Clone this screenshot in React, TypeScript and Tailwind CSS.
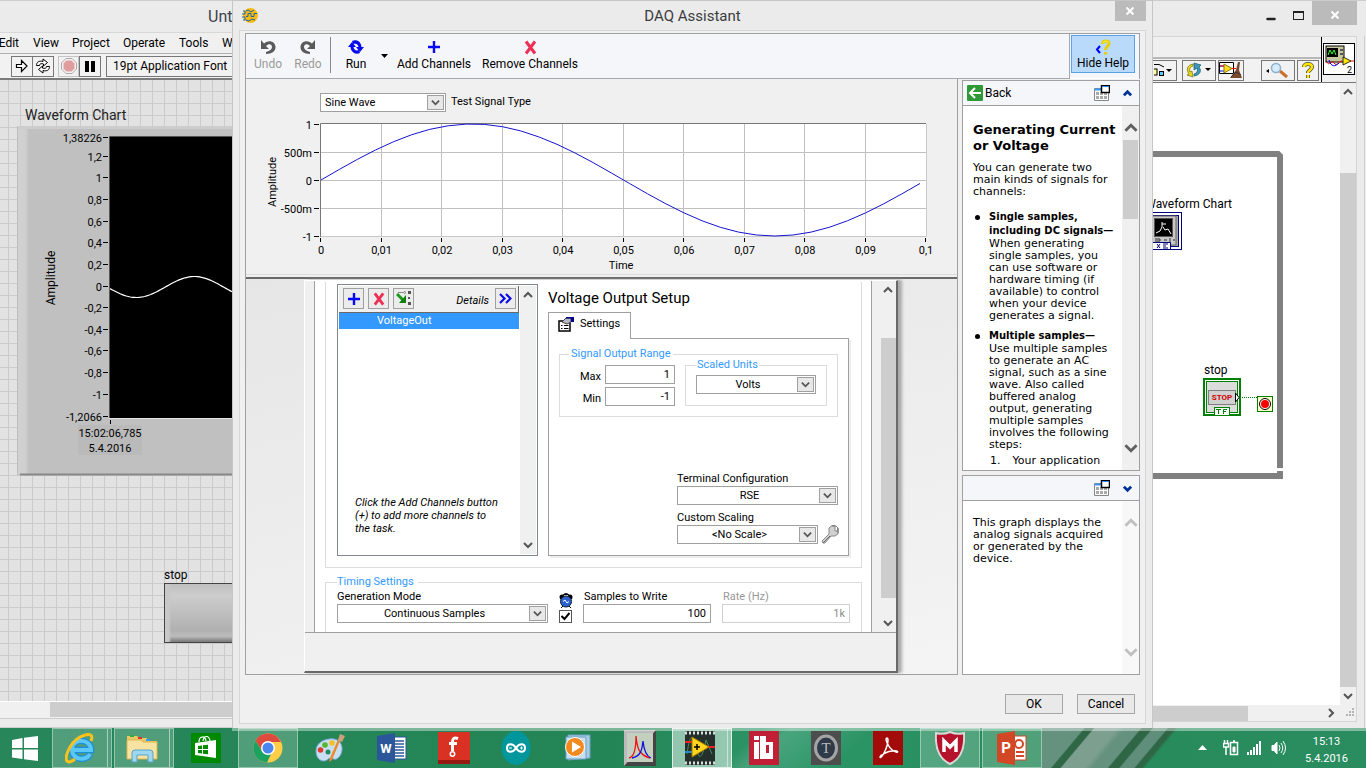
import type { ReactNode } from "react"
import { Minus } from "lucide-react"

const yLabels: [string, number][] = [
  ["1,38226", 138],
  ["1,2", 157],
  ["1", 178],
  ["0,8", 200],
  ["0,6", 222],
  ["0,4", 243],
  ["0,2", 265],
  ["0", 287],
  ["-0,2", 308],
  ["-0,4", 330],
  ["-0,6", 351],
  ["-0,8", 373],
  ["-1", 395],
  ["-1,2066", 417],
]

const previewTicks = ["0", "0,01", "0,02", "0,03", "0,04", "0,05", "0,06", "0,07", "0,08", "0,09", "0,1"]

const sine = (steps: number, x0: number, width: number, mid: number, amp: number, phase: number, turns: number) =>
  Array.from({ length: steps + 1 }, (_, i) => {
    const t = i / steps
    const y = mid - amp * Math.sin(phase + t * turns * 2 * Math.PI)
    return `${(x0 + t * width).toFixed(1)},${y.toFixed(1)}`
  }).join(" ")

type Direction = "up" | "down" | "right"

const chevrons: Record<Direction, string> = {
  up: "M1 7 L5 3 L9 7",
  down: "M1 3 L5 7 L9 3",
  right: "M3 1 L7 5 L3 9",
}

const Chevron = ({ dir, size = 10, color = "#555", width = 2 }: { dir: Direction; size?: number; color?: string; width?: number }) => (
  <svg width={size} height={size} viewBox="0 0 10 10" fill="none" stroke={color} strokeWidth={width}>
    <path d={chevrons[dir]} />
  </svg>
)

const CloseCross = () => (
  <svg width="8" height="8" viewBox="0 0 8 8" stroke="#fff" strokeWidth="2">
    <path d="M0.5 0.5 L7.5 7.5 M7.5 0.5 L0.5 7.5" />
  </svg>
)

const DropDown = ({ id, value, className, center = true }: { id: string; value: string; className: string; center?: boolean }) => (
  <div className={`relative h-[19px] border border-[#a0a0a0] bg-white ${className}`}>
    <select
      id={id}
      className={`block h-full w-full appearance-none bg-transparent pr-5 pl-1 text-[11px] leading-4 outline-none ${center ? "[text-align-last:center]" : ""}`}
    >
      <option>{value}</option>
    </select>
    <span className="pointer-events-none absolute inset-y-px right-px flex w-[17px] items-center justify-center border border-[#a0a0a0] bg-[#e8e8e8]">
      <Chevron dir="down" size={9} />
    </span>
  </div>
)

/* ---------- front panel window ---------- */

const FrontPanelChart = () => (
  <svg width="215" height="350" viewBox="17 126 215 350" className="ml-[17px] block font-['Roboto',sans-serif] text-[11px]">
    <defs>
      <linearGradient id="bevel">
        <stop offset="0" stopColor="#d2d2d2" />
        <stop offset="0.7" stopColor="#cfcfcf" />
        <stop offset="1" stopColor="#c0c0c0" />
      </linearGradient>
    </defs>
    <rect x="17" y="127" width="215" height="348" fill="#c0c0c0" />
    <rect x="17" y="127" width="12" height="347" fill="url(#bevel)" />
    <path d="M17 127.5H232" stroke="#cdcdcd" strokeWidth="3" />
    <path d="M17.5 127V474" stroke="#bdbdbd" />
    <path d="M20 474.5H232" stroke="#888" strokeWidth="2" />
    <rect x="110" y="136" width="122" height="282" fill="#000" />
    <path d="M109.500 418V136.500H232" stroke="#555" fill="none" />
    <path d="M109 418.500H232" stroke="#e4e4e4" />
    {yLabels.map(([text, y]) => (
      <g key={text}>
        <text x="102" y={y + 4} textAnchor="end">
          {text}
        </text>
        <path d={`M103 ${y - 0.5}H108`} stroke="#000" />
      </g>
    ))}
    <polyline points={sine(60, 110, 122, 287, 10.5, Math.PI + 0.15, 1.05)} fill="none" stroke="#fff" strokeWidth="1.2" />
    <path d="M110.500 420V424" stroke="#000" />
    <rect x="78" y="425" width="64" height="30" fill="#bababa" />
    <text x="110" y="437" textAnchor="middle">15:02:06,785</text>
    <text x="110" y="452" textAnchor="middle">5.4.2016</text>
    <text transform="translate(55 278) rotate(-90)" textAnchor="middle" fontSize="12">Amplitude</text>
  </svg>
)

const ToolButton = ({ label, className, children }: { label: string; className: string; children: ReactNode }) => (
  <button aria-label={label} className={`flex h-[21px] items-center justify-center border ${className}`}>
    {children}
  </button>
)

const FrontPanelWindow = () => (
  <section className="flex w-[232px] shrink-0 flex-col overflow-hidden border-t border-[#cccccc] bg-[#ebebeb]">
    <header className="flex h-8 items-center justify-end border-b border-[#d8d8d8] text-base text-[#3c424c]">
      <span className="w-6">Unt</span>
    </header>
    <nav className="flex h-5 shrink-0 items-center gap-[14px] overflow-hidden bg-[#f0f0f0] text-xs whitespace-nowrap">
      <a href="#edit" className="w-[19px] [direction:rtl]">Edit</a>
      <a href="#view" className="w-[25px]">View</a>
      <a href="#project" className="w-[37px]">Project</a>
      <a href="#operate" className="w-[42px]">Operate</a>
      <a href="#tools" className="w-[29px]">Tools</a>
      <a href="#window">Window</a>
    </nav>
    <div className="flex h-[27px] shrink-0 items-center border-t border-b-2 border-t-[#b0b0b0] border-b-[#7c7c7c] bg-[#f2f2f2] pl-[11px] text-xs">
      <ToolButton label="Run" className="w-[22px] border-[#777]">
        <svg width="14" height="14" viewBox="0 0 14 14" fill="#fff" stroke="#000" strokeWidth="1.200">
          <path d="M1.500 5.500H6.500V1.500L12 7L6.500 12.500V8.500H1.500Z" />
        </svg>
      </ToolButton>
      <ToolButton label="Run continuously" className="-ml-px w-[22px] border-[#777]">
        <svg width="16" height="16" viewBox="0 0 16 16" fill="#fff" stroke="#000">
          <path d="M1.500 7.500C1.500 4 4 2.500 8 3.500V1L12.500 4.500L8.500 8V6C6 5 4.500 6 4.500 7.500Z" />
          <path d="M14.500 8.500C14.500 12 12 13.500 8 12.500V15L3.500 11.500L7.500 8V10C10 11 11.500 10 11.500 8.500Z" />
        </svg>
      </ToolButton>
      <ToolButton label="Abort" className="ml-1 w-[21px] border-[#c4c4c4]">
        <svg width="16" height="16" viewBox="0 0 16 16">
          <path d="M5 0.500H11L15.500 5V11L11 15.500H5L0.500 11V5Z" fill="#f6f0f0" stroke="#aaa" />
          <path d="M5.500 2.500H10.500L13.500 5.500V10.500L10.500 13.500H5.500L2.500 10.500V5.500Z" fill="#df9d9d" />
        </svg>
      </ToolButton>
      <ToolButton label="Pause" className="w-[22px] border-[#777]">
        <svg width="10" height="11" viewBox="0 0 10 11">
          <path d="M0 0H4V11H0ZM6 0H10V11H6Z" />
        </svg>
      </ToolButton>
      <button className="ml-[5px] h-[21px] flex-1 border border-r-0 border-[#777] pl-[6px] text-left whitespace-nowrap">19pt Application Font</button>
    </div>
    <div className="min-h-0 flex-1 overflow-hidden bg-[#e2e2e2] bg-[linear-gradient(to_right,#cbcbcb_1px,transparent_1px),linear-gradient(to_bottom,#cbcbcb_1px,transparent_1px)] bg-[size:12px_12px] bg-[position:8px_11px] pt-[26px]">
      <h2 className="h-5 pl-[25px] text-sm leading-[18px] text-[#222]">Waveform Chart</h2>
      <FrontPanelChart />
      <div className="mt-[92px] ml-[164px] text-xs">
        <label htmlFor="stop" className="block h-[15px] leading-[15px]">stop</label>
        <button
          id="stop"
          aria-label="stop"
          className="block h-[60px] w-full border border-r-0 border-[#444] bg-[linear-gradient(#c0c0c0,#cdcdcd_20%,#b0b0b0_80%,#bcbcbc_90%,#777)] shadow-[inset_6px_0_2px_-1px_#c8c8c8]"
        />
      </div>
    </div>
    <div className="flex h-[17px] shrink-0 border-t border-white bg-[#f0f0f0] pl-[50px]">
      <div className="h-[15px] flex-1 bg-[#cdcdcd]" />
    </div>
    <div className="h-[10px] shrink-0 border-t border-b border-[#cccccc]" />
  </section>
)

/* ---------- block diagram window ---------- */

const BlockDiagram = () => (
  <svg width="187" height="623" viewBox="1153 83 187 623" className="block flex-1 bg-white font-['Roboto',sans-serif] text-[12px]">
    <path d="M1153 154H1278L1280 156V468" stroke="#808080" strokeWidth="6" fill="none" />
    <path d="M1153 476H1283M1277 472H1283" stroke="#808080" strokeWidth="6" />
    <path d="M1276 470H1283" stroke="#fff" strokeWidth="2" />
    <text x="1232" y="208" textAnchor="end">Waveform Chart</text>
    <g>
      <rect x="1144.500" y="212.500" width="37" height="37" fill="#fff" stroke="#00007f" />
      <rect x="1146.500" y="215.500" width="32" height="31" fill="#aaa" stroke="#00007f" />
      <rect x="1150" y="216" width="26" height="29" fill="#c8c8c8" stroke="#666" />
      <rect x="1154.500" y="218.500" width="18" height="18" fill="#000" stroke="#555" />
      <path d="M1156 233L1160 231L1162 227V222M1162 224H1166M1163 227L1165 230L1168 229L1171 234" stroke="#fff" fill="none" />
      <path d="M1155 239H1160V241H1155M1170 238V242M1174 239V241M1164 240H1167" stroke="#333" fill="none" />
      <rect x="1153" y="243" width="18" height="6" fill="#fff" />
      <path d="M1153 242.500H1170.500V249M1157 244L1160 248M1160 244L1157 248M1163 244H1168M1163 248H1168M1163 246H1166" stroke="#00007f" fill="none" />
    </g>
    <text x="1204" y="374">stop</text>
    <rect x="1204" y="379" width="36" height="36" fill="#fff" stroke="#008000" strokeWidth="2" />
    <rect x="1206.500" y="381.500" width="31" height="31" fill="#dcdcdc" stroke="#008000" />
    <rect x="1208.500" y="390.500" width="27" height="14" fill="#d0d0d0" stroke="#808080" />
    <text x="1222" y="400" textAnchor="middle" fill="#d00000" fontSize="8" fontWeight="700">STOP</text>
    <path d="M1235.500 393V402L1239 397.500Z" fill="#fff" stroke="#000" />
    <rect x="1214.500" y="407.500" width="15" height="8" fill="#fff" stroke="#008000" />
    <path d="M1216 409.500H1221M1218.500 409V414M1223.500 414V409.500H1227M1223 411.500H1226" stroke="#008000" fill="none" />
    <path d="M1242 397.500H1257" stroke="#008000" strokeDasharray="1 1" />
    <rect x="1257.500" y="396.500" width="15" height="15" fill="#ffffcc" stroke="#008000" />
    <circle cx="1265" cy="404" r="5.500" fill="#fff" stroke="#000" />
    <circle cx="1265" cy="404" r="4" fill="#f00" />
  </svg>
)

const BlockDiagramWindow = () => (
  <section className="flex w-[213px] shrink-0 flex-col border-t border-[#cccccc] bg-[#ebebeb]">
    <header className="flex h-[35px] items-start justify-end pr-[9px]">
      <button aria-label="Minimize" className="mt-3 mr-4">
        <Minus size={12} strokeWidth={5} className="text-[#222]" />
      </button>
      <button aria-label="Maximize" className="mt-[10px] h-[9px] w-[11px] border border-t-2 border-[#222]" />
      <button aria-label="Close" className="ml-2 flex h-[24px] w-[45px] items-center justify-center bg-[#bbbbbb] pt-1">
        <CloseCross />
      </button>
    </header>
    <div className="mr-px flex min-h-0 flex-1 flex-col border-r border-[#cfcfcf] pr-[7px]">
      <div className="flex min-h-0 flex-1 flex-col border-t border-r border-b border-[#d4d4d4] bg-[#f0f0f0]">
        <div className="flex h-[46px] shrink-0 border-b border-[#777]">
          <div className="flex flex-1 flex-col">
            <div className="h-5" />
            <div className="flex h-[25px] items-center border-t-2 border-[#b8b8b8] bg-[#f2f2f2]">
              <ToolButton label="Reorder" className="w-[24px] border-l-0 border-[#777]">
                <svg width="22" height="15" viewBox="0 0 22 15">
                  <path d="M0 1.500H5L10 4" stroke="#000" fill="none" />
                  <rect x="-1" y="6" width="4" height="6" fill="#ff9" stroke="#000" />
                  <rect x="5.500" y="8.500" width="4" height="4" fill="#5cf" stroke="#000" />
                  <path d="M12 6H18L15 9Z" />
                </svg>
              </ToolButton>
              <ToolButton label="Clean up" className="ml-[5px] w-[34px] border-[#777]">
                <svg width="28" height="17" viewBox="0 0 28 17">
                  <path d="M8 2C2 3 1 8 4 12L2 13L8 15L7 9L5 10C4 7 5 5 8 4Z" fill="#e8d820" stroke="#77700a" strokeWidth="0.700" />
                  <path d="M9 14C15 13 17 9 14 5L16 3L9 1V8L12 6C13 9 12 11 9 12Z" fill="#3b9bb8" stroke="#14566c" strokeWidth="0.700" />
                  <path d="M20 6H26L23 9Z" />
                </svg>
              </ToolButton>
              <ToolButton label="Clean up diagram" className="ml-[2px] w-[26px] border-[#777]">
                <svg width="24" height="19" viewBox="0 0 24 19">
                  <path d="M0.500 1.500H14.500V12.500H0.500Z" stroke="#000" fill="#fff" />
                  <path d="M1 5H5M1 10H5" stroke="#00f" />
                  <path d="M1 5H5M12 7.500H17" stroke="#f00" />
                  <path d="M5 3L13 7.500L5 12Z" fill="#ffde20" stroke="#8a7400" />
                  <path d="M19 1L21 1L20 9L23 17H11L17 9Z" fill="#7a4a2c" />
                  <path d="M12 16L17 11L22 14" stroke="#333" fill="none" />
                </svg>
              </ToolButton>
              <ToolButton label="Search" className="ml-[17px] w-[34px] border-[#777]">
                <svg width="24" height="18" viewBox="0 0 24 18">
                  <path d="M3 7V11L0 9Z" />
                  <path d="M14 9L21 15" stroke="#c8702c" strokeWidth="3" />
                  <circle cx="10" cy="6" r="4.500" fill="#d6ecfa" stroke="#8ab0cc" strokeWidth="1.500" />
                </svg>
              </ToolButton>
              <ToolButton label="Context help" className="ml-[2px] w-[22px] border-[#777]">
                <svg width="12" height="17" viewBox="0 0 12 17" fill="none">
                  <path d="M2 5C2 1 10 1 10 5C10 8 6 8 6 11M6 13V16" stroke="#444" strokeWidth="4" />
                  <path d="M2 5C2 1 10 1 10 5C10 8 6 8 6 11M6 13V16" stroke="#ffe600" strokeWidth="2.500" />
                </svg>
              </ToolButton>
            </div>
          </div>
          <div className="flex w-[35px] items-center border-l border-black pl-px">
            <svg width="33" height="33" viewBox="0 0 33 33">
              <rect x="0.500" y="0.500" width="31" height="31" fill="#fff" stroke="#000" />
              <rect x="3" y="3" width="18" height="16" fill="#c8c8a0" stroke="#000" />
              <rect x="4" y="5" width="11" height="9" fill="#000" />
              <path d="M5 12L7 7L9 11L11 7L13 12" stroke="#3f3" fill="none" />
              <path d="M17 7H20M17 11H20" stroke="#555" strokeWidth="2" />
              <path d="M4 19C6 24 8 16 11 20S16 18 19 18" stroke="#f00" fill="none" />
              <path d="M6 17C8 24 12 24 16 20" stroke="#00f" fill="none" />
              <path d="M20 14L28 18L20 22Z" fill="#ffe600" stroke="#000" strokeWidth="0.800" />
              <path d="M28 18H31" stroke="#f00" />
              <text x="24" y="30" fontSize="9">2</text>
            </svg>
          </div>
        </div>
        <div className="flex min-h-0 flex-1 overflow-hidden">
          <BlockDiagram />
          <div className="flex w-4 flex-col items-center py-1">
            <Chevron dir="up" />
            <div className="mt-[76px] w-full flex-1 bg-[#cdcdcd]" />
            <div className="pt-1">
              <Chevron dir="down" />
            </div>
          </div>
        </div>
        <div className="flex h-4 shrink-0 items-center justify-between">
          <div className="h-[15px] w-[95px] bg-[#cdcdcd]" />
          <div className="flex items-center gap-[10px]">
            <Chevron dir="right" />
            <svg width="10" height="10" viewBox="0 0 10 10" fill="#b4b4b4">
              <path d="M6 0h2v2H6zM6 3h2v2H6zM3 3h2v2H3zM6 6h2v2H6zM3 6h2v2H3zM0 6h2v2H0z" />
            </svg>
          </div>
        </div>
      </div>
      <div className="h-[6px] shrink-0" />
    </div>
  </section>
)

/* ---------- DAQ Assistant dialog ---------- */

const UndoArrow = ({ flip = false }: { flip?: boolean }) => (
  <svg width="16" height="16" viewBox="0 0 16 16" className={flip ? "-scale-x-100" : ""}>
    <path d="M1 1V10H9L6 7C9 4 12 5 12 8C12 10 10 12 6 13V15C12 15 16 12 15.500 7.500C15 2.500 9 0 4 4.500Z" fill="#5a5a5a" />
  </svg>
)

const RunArrows = () => (
  <svg width="16" height="16" viewBox="0 0 16 16" fill="#0a0aee">
    <path d="M0 8L4 3L8 8H5.500C6 11 8 12 11 11L12 14C7 16 3 13 2.500 8Z" />
    <path d="M16 8L12 13L8 8H10.500C10 5 8 4 5 5L4 2C9 0 13 3 13.500 8Z" />
  </svg>
)

const PlusMark = ({ size = 14 }: { size?: number }) => (
  <svg width={size} height={size} viewBox="0 0 14 14" stroke="#0a0aee" strokeWidth="2.400">
    <path d="M7 1V13M1 7H13" />
  </svg>
)

const RedCross = ({ size = 15 }: { size?: number }) => (
  <svg width={size} height={size} viewBox="0 0 15 15" stroke="#ee2f55" strokeWidth="3">
    <path d="M3 1.500L12 13.500M12 1.500L3 13.500" />
  </svg>
)

const BarButton = ({ label, icon, className }: { label: string; icon: ReactNode; className: string }) => (
  <button className={`flex flex-col items-center whitespace-nowrap ${className}`}>
    <span className="flex h-5 items-center">{icon}</span>
    <span className="leading-[14px]">{label}</span>
  </button>
)

const DialogToolbar = () => (
  <div className="flex h-[46px] shrink-0 border-x border-t border-[#a0a0a0] text-xs">
    <div className="flex flex-1 border-r border-b border-[#a8a8ac] bg-[#f5f6f9] pt-[3px]">
      <BarButton label="Undo" icon={<UndoArrow />} className="w-11 text-[#9a9a9a]" />
      <BarButton label="Redo" icon={<UndoArrow flip />} className="w-9 text-[#9a9a9a]" />
      <div className="ml-1 h-9 w-px bg-[#888]" />
      <BarButton label="Run" icon={<RunArrows />} className="w-[50px]" />
      <button aria-label="Run options" className="h-7 w-2 pt-[10px]">
        <svg width="7" height="4" viewBox="0 0 7 4">
          <path d="M0 0H7L3.500 4Z" />
        </svg>
      </button>
      <BarButton label="Add Channels" icon={<PlusMark />} className="w-[90px]" />
      <BarButton label="Remove Channels" icon={<RedCross />} className="w-[102px]" />
    </div>
    <div className="w-[69px] border-b border-white bg-[#f5f6f9] pt-px pl-px">
      <button className="flex h-[38px] w-16 flex-col items-center border border-[#5ba1e6] bg-[#b9dafa] pt-[3px]">
        <svg width="16" height="17" viewBox="0 0 16 17" fill="none" className="shrink-0">
          <path d="M5 7L2 10.500L5 14" stroke="#00f" strokeWidth="2" />
          <path d="M7.500 5C7.500 1 14 1 14 4.500C14 7.500 10.500 7.500 10.500 11M10.500 13V15.500" stroke="#e8d000" strokeWidth="3" />
          <path d="M8 4C9 1.500 13 1.500 13.500 4" stroke="#fff34a" />
        </svg>
        <span className="leading-[14px]">Hide Help</span>
      </button>
    </div>
  </div>
)

const PreviewGraph = () => (
  <svg width="690" height="158" viewBox="246 114 690 158" className="block font-['Roboto',sans-serif] text-[11px]">
    <rect x="320" y="123" width="606" height="114" fill="#fff" />
    {previewTicks.map((t, i) => (
      <g key={t}>
        {i > 0 && i < 10 && <path d={`M${Math.round(320 + i * 60.5) + 0.5} 124V236`} stroke="#c0c0c0" />}
        <path d={`M${Math.round(320 + i * 60.5) + 0.5} 238V242`} stroke="#000" />
        <text x={321 + i * 60.5} y="254" textAnchor="middle">
          {t}
        </text>
      </g>
    ))}
    {["1", "500m", "0", "-500m", "-1"].map((t, i) => (
      <g key={t}>
        {i > 0 && i < 4 && <path d={`M321 ${124.5 + i * 28}H926`} stroke="#c0c0c0" />}
        <path d={`M314 ${124.5 + i * 28}H319`} stroke="#000" />
        <text x="312" y={129 + i * 28} textAnchor="end">
          {t}
        </text>
      </g>
    ))}
    <path d="M320.500 237V123.500H926" stroke="#777" fill="none" />
    <path d="M321 236.500H926.500V124" stroke="#c8c8c8" fill="none" />
    <polyline points={sine(33, 321, 599, 180, 56, 0, 0.99)} fill="none" stroke="#1414cc" />
    <text x="621" y="269" textAnchor="middle">Time</text>
    <text transform="translate(276 182) rotate(-90)" textAnchor="middle">Amplitude</text>
  </svg>
)

const SmallButton = ({ label, children }: { label: string; children: ReactNode }) => (
  <button aria-label={label} className="flex h-[21px] w-[21px] items-center justify-center border border-[#a0a0a0] bg-[#ececec]">
    {children}
  </button>
)

const ChannelList = () => (
  <div className="mt-[2px] flex h-[272px] w-[201px] shrink-0 border border-[#828790] bg-white p-px">
    <div className="flex flex-1 flex-col pr-px">
      <div className="flex h-[27px] items-start gap-1 border-r border-b border-[#696969] bg-[#f0f0f0] pt-[2px] pr-[2px] pl-1">
        <SmallButton label="Add">
          <PlusMark />
        </SmallButton>
        <SmallButton label="Remove">
          <RedCross size={14} />
        </SmallButton>
        <SmallButton label="Change order">
          <svg width="16" height="15" viewBox="0 0 16 15">
            <path d="M1 3L8 10" stroke="#1a9a1a" strokeWidth="3" />
            <path d="M10 4V12H3Z" fill="#108010" />
            <path d="M2 1.500H8M8 0L10 1.500L8 3" stroke="#888" fill="none" />
            <path d="M12 0h3v3h-3zM12 11h3v3h-3zM12 6h2v2h-2z" fill="#555" />
          </svg>
        </SmallButton>
        <span className="ml-auto pt-[5px] pr-[2px] italic">Details</span>
        <SmallButton label="Show details">
          <svg width="13" height="11" viewBox="0 0 13 11" fill="none" stroke="#0a0aee" strokeWidth="2.200">
            <path d="M1 1L5.500 5.500L1 10M7 1L11.500 5.500L7 10" />
          </svg>
        </SmallButton>
      </div>
      <div className="h-4 bg-[#3399ff] pl-[38px] leading-[15px] text-white">VoltageOut</div>
      <p className="mt-auto mb-[19px] pl-4 leading-[13px] italic">
        Click the Add Channels button
        <br />
        (+) to add more channels to
        <br />
        the task.
      </p>
    </div>
    <div className="flex w-4 flex-col items-center justify-between bg-[#f0f0f0] py-1">
      <Chevron dir="up" />
      <Chevron dir="down" />
    </div>
  </div>
)

const fieldClass = "h-[19px] border border-[#a0a0a0] bg-white px-1 text-right text-[11px] outline-none"

const VoltageSetup = () => (
  <div className="flex w-[301px] shrink-0 flex-col">
    <h2 className="h-[30px] pt-[6px] text-[15px] leading-5">Voltage Output Setup</h2>
    <button className="relative -mb-px flex h-[27px] w-[83px] shrink-0 items-center gap-[5px] border border-b-0 border-[#a0a0a0] bg-white pb-1 pl-[9px]">
      <svg width="17" height="15" viewBox="0 0 17 15">
        <rect x="1" y="4" width="11" height="10" fill="#fff" stroke="#000" strokeWidth="1.500" />
        <path d="M3 8.500H4.500M6 8.500H10.500M3 11.500H4.500M6 11.500H10.500" stroke="#000" />
        <path d="M4 5L8 1H13V5L9 7Z" fill="#b8b8c8" stroke="#444" />
        <path d="M8 0H16V5H13V1.500H8Z" fill="#00008a" />
      </svg>
      Settings
    </button>
    <div className="h-[218px] border border-[#a0a0a0] pt-2 pl-[10px] shadow-[2px_2px_0_#ededed]">
      <fieldset className="flex h-[70px] w-[279px] border border-[#dcdcdc]">
        <legend className="ml-[9px] h-[14px] px-[2px] leading-[14px] text-[#3399ff]">Signal Output Range</legend>
        <div className="grid h-[42px] grid-cols-[41px_70px] items-center gap-x-1 gap-y-[3px] pt-1 text-right">
          <label htmlFor="max" className="pt-[5px] leading-[14px]">Max</label>
          <input id="max" defaultValue="1" className={fieldClass} />
          <label htmlFor="min" className="pt-[5px] leading-[14px]">Min</label>
          <input id="min" defaultValue="-1" className={fieldClass} />
        </div>
        <fieldset className="-mt-[3px] ml-[10px] h-12 w-[142px] border border-[#dcdcdc] pt-[3px] pl-[10px]">
          <legend className="h-[14px] px-px leading-[14px] text-[#3399ff]">
            <label htmlFor="units">Scaled Units</label>
          </legend>
          <DropDown id="units" value="Volts" className="w-[120px]" />
        </fieldset>
      </fieldset>
      <div className="mt-[55px] ml-[118px] leading-[14px]">
        <label htmlFor="terminal" className="block">Terminal Configuration</label>
        <DropDown id="terminal" value="RSE" className="w-[161px]" />
        <label htmlFor="scaling" className="mt-[6px] block">Custom Scaling</label>
        <div className="flex items-center gap-[3px]">
          <DropDown id="scaling" value="<No Scale>" className="w-[141px]" />
          <button aria-label="Edit scale">
            <svg width="18" height="19" viewBox="0 0 18 19">
              <path d="M1 16L8 9V3L11 0.500H14V6H16L17 3V9L14 11H10L4 18H2Z" fill="#d0d0d0" stroke="#888" />
              <path d="M11 1H15L17 3V8" stroke="#777" fill="none" />
              <path d="M2 18L9 11" stroke="#666" />
            </svg>
          </button>
        </div>
      </div>
    </div>
  </div>
)

const TimingSettings = () => (
  <fieldset className="mt-[7px] h-20 w-[537px] border border-[#dcdcdc] pl-[11px]">
    <legend className="h-[14px] pr-1 leading-[14px] text-[#3399ff]">Timing Settings</legend>
    <div className="flex items-start pt-px leading-[14px]">
      <div>
        <label htmlFor="mode" className="block">Generation Mode</label>
        <DropDown id="mode" value="Continuous Samples" className="w-[211px]" />
      </div>
      <label className="ml-[10px] flex w-[15px] flex-col items-center gap-px pt-[3px]">
        <svg width="14" height="16" viewBox="0 0 14 16">
          <path d="M5 1.500H9M4 2L7 0L10 2" stroke="#000" fill="none" />
          <circle cx="3" cy="4" r="2.500" />
          <circle cx="11" cy="4" r="2.500" />
          <path d="M2 15L4 13M12 15L10 13" stroke="#000" />
          <circle cx="7" cy="8.500" r="5.500" fill="#2c62d0" stroke="#123" />
          <path d="M4 8.500L6 7L8 10L10 8.500" stroke="#fff" fill="none" />
        </svg>
        <span className="relative block h-[13px] w-[13px]">
          <input type="checkbox" defaultChecked aria-label="Use waveform timing" className="block h-[13px] w-[13px] appearance-none border border-[#555] bg-white" />
          <svg width="9" height="9" viewBox="0 0 9 9" className="pointer-events-none absolute top-[2px] left-[2px]">
            <path d="M0.500 4L3.500 7L8.500 1" stroke="#000" strokeWidth="2" fill="none" />
          </svg>
        </span>
      </label>
      <div className="ml-[10px] w-[128px]">
        <label htmlFor="samples" className="block pl-px">Samples to Write</label>
        <input id="samples" defaultValue="100" className={`w-full ${fieldClass}`} />
      </div>
      <div className="ml-[11px] w-[128px]">
        <label htmlFor="rate" className="block pl-px text-[#999]">Rate (Hz)</label>
        <input id="rate" defaultValue="1k" disabled className="h-[19px] w-full border border-[#d0d0d0] bg-white px-1 text-right text-[11px] text-[#8c8c8c]" />
      </div>
    </div>
  </fieldset>
)

const PanelIcon = () => (
  <svg width="16" height="16" viewBox="0 0 16 16">
    <path d="M0.500 3.500H14.500V15.500H0.500Z" fill="#fff" stroke="#888" />
    <path d="M1 4.500H7" stroke="#3399ff" strokeWidth="2" />
    <path d="M2 7h3v3H2zM6 7h3v3H6zM10 8h3v2h-3zM2 11h3v3H2zM6 11h3v3H6zM10 11h3v3h-3z" fill="#aaa" />
    <rect x="7.500" y="0.500" width="8" height="7" fill="#fff" stroke="#000" strokeWidth="1.500" />
    <path d="M8 1.500H15" stroke="#38f" />
  </svg>
)

const HelpScroll = ({ thumb = false }: { thumb?: boolean }) => (
  <div className={`flex w-[17px] shrink-0 flex-col items-center py-[15px] ${thumb ? "bg-[#f0f0f0]" : "bg-[#f8f8f8]"}`}>
    <Chevron dir="up" size={14} color={thumb ? "#606060" : "#c0c0c0"} />
    <div className={`mt-[5px] h-[79px] w-[15px] ${thumb ? "bg-[#cdcdcd]" : ""}`} />
    <div className="mt-auto">
      <Chevron dir="down" size={14} color={thumb ? "#606060" : "#c0c0c0"} />
    </div>
  </div>
)

const HelpColumn = () => (
  <aside className="flex w-[178px] shrink-0 flex-col gap-1 pt-px">
    <section className="flex min-h-0 flex-1 flex-col border border-[#a0a0a0] bg-white">
      <header className="flex h-[25px] shrink-0 items-center border-b border-[#a0a0a0] bg-[#f5f6f9] pr-[7px] pl-1 text-xs">
        <button className="flex items-center gap-[2px]">
          <svg width="16" height="16" viewBox="0 0 16 16">
            <rect width="16" height="16" rx="1" fill="#2d9a37" />
            <path d="M8 3L3 8L8 13M3 8H14" stroke="#fff" strokeWidth="2" fill="none" />
          </svg>
          Back
        </button>
        <button aria-label="Detach help" className="mr-[13px] ml-auto">
          <PanelIcon />
        </button>
        <button aria-label="Collapse help">
          <Chevron dir="up" size={9} color="#003399" width={3} />
        </button>
      </header>
      <div className="flex min-h-0 flex-1">
        <article className="min-w-0 flex-1 overflow-hidden pt-4 pl-[10px] font-['DejaVu_Sans',sans-serif] text-[11px] leading-3 whitespace-nowrap">
          <h2 className="text-[13px] leading-4 font-bold">
            Generating Current
            <br />
            or Voltage
          </h2>
          <p className="mt-2">
            You can generate two
            <br />
            main kinds of signals for
            <br />
            channels:
          </p>
          <ul className="mt-3 list-none">
            <li className="flex gap-[9px]">
              <span className="mt-[5px] ml-[2px] h-[5px] w-[5px] shrink-0 rounded-full bg-black" />
              <span>
                <b className="block text-[10px] leading-[14px]">
                  Single samples,
                  <br />
                  including DC signals—
                </b>
                When generating
                <br />
                single samples, you
                <br />
                can use software or
                <br />
                hardware timing (if
                <br />
                available) to control
                <br />
                when your device
                <br />
                generates a signal.
              </span>
            </li>
            <li className="mt-[7px] flex gap-[9px]">
              <span className="mt-[5px] ml-[2px] h-[5px] w-[5px] shrink-0 rounded-full bg-black" />
              <span>
                <b className="block text-[10px] leading-[14px]">Multiple samples—</b>
                Use multiple samples
                <br />
                to generate an AC
                <br />
                signal, such as a sine
                <br />
                wave. Also called
                <br />
                buffered analog
                <br />
                output, generating
                <br />
                multiple samples
                <br />
                involves the following
                <br />
                steps:
                <ol className="mt-1">
                  <li className="flex gap-3 pl-px">
                    <span>1.</span>
                    <span>Your application</span>
                  </li>
                </ol>
              </span>
            </li>
          </ul>
        </article>
        <HelpScroll thumb />
      </div>
    </section>
    <section className="flex h-[200px] shrink-0 flex-col border border-[#a0a0a0] bg-white">
      <header className="flex h-[25px] shrink-0 items-center justify-end gap-[13px] border-b border-[#a0a0a0] bg-[#f5f6f9] pr-[7px]">
        <button aria-label="Detach description">
          <PanelIcon />
        </button>
        <button aria-label="Expand description">
          <Chevron dir="down" size={9} color="#003399" width={3} />
        </button>
      </header>
      <div className="flex flex-1">
        <p className="flex-1 overflow-hidden pt-4 pl-[10px] font-['DejaVu_Sans',sans-serif] text-[11px] leading-3 whitespace-nowrap">
          This graph displays the
          <br />
          analog signals acquired
          <br />
          or generated by the
          <br />
          device.
        </p>
        <HelpScroll />
      </div>
    </section>
  </aside>
)

const DaqDialog = () => (
  <section className="flex min-w-0 flex-1 flex-col border-x border-t border-[#c6c6c6] bg-[#ebebeb]">
    <header className="flex h-[29px] shrink-0 items-start justify-between pl-[9px]">
      <svg width="16" height="17" viewBox="0 0 16 17" className="mt-[6px]">
        <circle cx="8.500" cy="8.500" r="7.500" fill="#fdb913" />
        <path d="M1 4H3V7H0M1 13H3V10H0M4 9.500H6V6.500H9V9.500H12V6.500H15M4 4L6 3L9 5L12 3M4 13L7 14L10 12L13 13" stroke="#1666a8" fill="none" />
      </svg>
      <h1 className="pt-[5px] pl-3 text-[15px] leading-5 text-[#3c3c3c]">DAQ Assistant</h1>
      <button aria-label="Close" className="mr-[6px] flex h-5 w-[31px] items-center justify-center bg-[#bbbbbb]">
        <CloseCross />
      </button>
    </header>
    <div className="mx-[6px] flex min-h-0 flex-1 flex-col border border-[#d6d6d6] bg-[#f0f0f0] px-[5px] pt-[2px]">
      <DialogToolbar />
      <div className="flex min-h-0 flex-1 gap-1">
        <div className="flex min-w-0 flex-1 flex-col border-x border-b border-[#a0a0a0] text-[11px]">
          <div className="h-[200px] shrink-0 border-b-2 border-[#696969]">
            <div className="h-[196px] border-b border-[#dcdcdc] pt-[14px]">
              <div className="flex h-[19px] items-center gap-[5px] pl-[74px]">
                <DropDown id="signal" value="Sine Wave" center={false} className="w-[126px]" />
                <label htmlFor="signal">Test Signal Type</label>
              </div>
              <div className="pt-[2px]">
                <PreviewGraph />
              </div>
            </div>
          </div>
          <div className="flex min-h-0 flex-1 bg-[linear-gradient(165deg,#e6e6e6,#f4f4f4)] py-px pl-[58px]">
            <div className="flex w-[594px] flex-col border-t border-r-2 border-b-2 border-l border-t-white border-r-[#696969] border-b-[#696969] border-l-white bg-[#f0f0f0] shadow-[4px_0_3px_#aaa]">
              <div className="flex min-h-0 flex-1 overflow-hidden">
                <div className="ml-[9px] w-[558px] overflow-hidden border-x border-[#a0a0a0] bg-white pt-px pl-[10px]">
                  <div className="flex h-[286px] w-[537px] gap-[10px] border-x border-b border-[#dcdcdc] pl-[11px]">
                    <ChannelList />
                    <VoltageSetup />
                  </div>
                  <TimingSettings />
                </div>
                <div className="ml-2 flex w-4 flex-col items-center pt-1 pb-1">
                  <Chevron dir="up" />
                  <div className="mt-[43px] mb-5 w-[15px] flex-1 bg-[#cdcdcd]" />
                  <Chevron dir="down" />
                </div>
              </div>
              <div className="h-[39px] shrink-0 border-t border-[#a0a0a0]" />
            </div>
          </div>
        </div>
        <HelpColumn />
      </div>
      <footer className="flex h-12 shrink-0 items-start justify-end gap-[14px] pt-[19px] pr-[5px] text-xs">
        <button className="h-5 w-[58px] border border-[#a6a6a6] bg-[#e9e9e9] leading-[18px]">OK</button>
        <button className="h-5 w-[58px] border border-[#a6a6a6] bg-[#e9e9e9] leading-[18px]">Cancel</button>
      </footer>
    </div>
    <div className="h-1 shrink-0" />
  </section>
)

/* ---------- taskbar ---------- */

const apps: { name: string; state?: "open" | "stack" | "active"; icon: ReactNode }[] = [
  {
    name: "Internet Explorer",
    state: "stack",
    icon: (
      <svg width="30" height="32" viewBox="0 0 30 32" fill="none">
        <path d="M25 22C22 29 7 29 7 17C7 6 26 6 26 18H9" stroke="#1c8fd8" strokeWidth="6.500" />
        <path d="M25 22C22 29 7 29 7 17C7 6 26 6 26 18H9" stroke="#5cc8fa" strokeWidth="4" />
        <path d="M26 9C31-3 12 3 5 15C-3 30 3 33 10 27" stroke="#fcc21b" strokeWidth="3" />
      </svg>
    ),
  },
  {
    name: "File Explorer",
    state: "stack",
    icon: (
      <svg width="32" height="30" viewBox="0 0 32 30">
        <path d="M1 3H11L13 5H21V8H31V25H1Z" fill="#e9c765" />
        <path d="M1 7H15L17 9H31V26H1Z" fill="#f8e3a0" stroke="#dbb650" />
        <path d="M4 2H8V4H4Z" fill="#3a4" />
        <path d="M12 4H16V6H12Z" fill="#d33" />
        <path d="M20 6H24V8H20Z" fill="#39f" />
        <path d="M6 29V20Q6 17 9 17H24Q27 17 27 20V29H22V22H11V29Z" fill="#9ed7f0" stroke="#5aa3c8" />
      </svg>
    ),
  },
  {
    name: "Store",
    icon: (
      <svg width="30" height="30" viewBox="0 0 30 30">
        <rect width="30" height="30" fill="#008a00" />
        <path d="M4 10L25 7V25L4 22Z" fill="#fff" />
        <path d="M8 9C8 3 14 2 15 8M12 8C13 2 18 2 19 8" stroke="#fff" fill="none" strokeWidth="1.200" />
        <path d="M7 13L11 12.500V16H7ZM12 12.300L17 11.800V16H12ZM7 17H11V20.500L7 20ZM12 17H17V21.300L12 20.700Z" fill="#008a00" />
      </svg>
    ),
  },
  {
    name: "Chrome",
    state: "open",
    icon: (
      <svg width="30" height="30" viewBox="0 0 30 30">
        <circle cx="15" cy="15" r="14.500" fill="#ffcd46" />
        <path d="M15 0.500A14.500 14.500 0 0 1 28 9H15L9 18L2.500 7.500A14.500 14.500 0 0 1 15 0.500Z" fill="#dd4b3e" />
        <path d="M2.500 7.500L9 18L18 21L14 29.500A14.500 14.500 0 0 1 2.500 7.500Z" fill="#1aa260" />
        <circle cx="15" cy="15" r="7" fill="#fff" />
        <circle cx="15" cy="15" r="5.500" fill="#4a86f0" />
      </svg>
    ),
  },
  {
    name: "Paint",
    icon: (
      <svg width="32" height="30" viewBox="0 0 32 30">
        <path d="M2 18C2 9 12 5 20 6C30 8 30 20 24 25C19 29 18 22 13 27C8 30 2 26 2 18Z" fill="#c8dff2" stroke="#7aa8d4" />
        <circle cx="6.500" cy="17" r="2.800" fill="#e03b2c" />
        <circle cx="11" cy="12" r="2.800" fill="#58b52e" />
        <circle cx="18" cy="10" r="2.800" fill="#f6c024" />
        <circle cx="14" cy="19" r="2.500" fill="#26885a" />
        <path d="M28 3L18 27L15 29L16 25L26 2Z" fill="#ee8a2e" />
        <path d="M24 8L26 1L31 3L28 9Z" fill="#c9a27c" />
      </svg>
    ),
  },
  {
    name: "Word",
    icon: (
      <svg width="30" height="30" viewBox="0 0 30 30">
        <rect x="16" y="4" width="13" height="22" fill="#fff" stroke="#2b579a" />
        <path d="M18 8H27M18 11H27M18 14H27M18 17H27M18 20H27M18 23H27" stroke="#2b579a" strokeWidth="1.500" />
        <path d="M0 3L18 0V30L0 27Z" fill="#2b579a" />
        <text x="9" y="20" textAnchor="middle" fontSize="13" fontWeight="700" fill="#fff">W</text>
      </svg>
    ),
  },
  {
    name: "Fritzing",
    icon: (
      <svg width="32" height="32" viewBox="0 0 32 32" fill="none">
        <rect width="32" height="32" fill="#d93122" />
        <rect y="28" width="32" height="4" fill="#971a10" />
        <path d="M20 6.500C16 5 14.500 6.500 14.500 10V19M11 11.500H19" stroke="#fff" strokeWidth="3" />
        <circle cx="14.500" cy="22" r="2.200" stroke="#fff" strokeWidth="1.500" />
      </svg>
    ),
  },
  {
    name: "Arduino",
    icon: (
      <svg width="30" height="36" viewBox="0 0 30 36">
        <ellipse cx="15" cy="18" rx="14.500" ry="17" fill="#00979c" />
        <path d="M15 18C12 13 6 13 6 18S12 23 15 18S24 13 24 18S18 23 15 18" stroke="#fff" strokeWidth="2" fill="none" />
        <path d="M8 18H11M19 18H22M20.500 16.500V19.500" stroke="#fff" />
      </svg>
    ),
  },
  {
    name: "Media Player",
    icon: (
      <svg width="28" height="28" viewBox="0 0 28 28">
        <path d="M4 1H26V24L4 26Z" fill="#a8cbe2" stroke="#6ca1c4" />
        <path d="M2 3H22V25H2Z" fill="#c7dff0" stroke="#6ca1c4" />
        <circle cx="11" cy="13" r="9.500" fill="#f08a1e" stroke="#fff" />
        <path d="M8 7.500L17 13L8 18.500Z" fill="#fff" />
      </svg>
    ),
  },
  {
    name: "Spectrum",
    icon: (
      <svg width="32" height="36" viewBox="0 0 32 36" fill="none">
        <rect width="32" height="36" fill="#bbb" />
        <path d="M32 0V36H0Z" fill="#444" />
        <rect x="3" y="3" width="26" height="29" fill="#c3d0bf" />
        <path d="M5 28C11 27 12 16 12 6C13 18 15 25 26 28" stroke="#e11" strokeWidth="1.300" />
        <path d="M8 28C17 26 18 20 19 11C20 21 22 26 27 28" stroke="#11d" strokeWidth="1.300" />
      </svg>
    ),
  },
  {
    name: "LabVIEW",
    state: "active",
    icon: (
      <svg width="32" height="34" viewBox="0 0 32 34">
        <rect x="1" width="30" height="34" fill="#23302c" />
        <path d="M1 2H31M1 32H31" stroke="#ddd" strokeWidth="3" strokeDasharray="2 2" />
        <path d="M3 23C6 2 9 2 12 16S18 29 22 9L28 23" stroke="#4a8a60" fill="none" />
        <path d="M1 11H9M25 16H31" stroke="#e22" strokeWidth="2" />
        <path d="M1 21H9" stroke="#28c" strokeWidth="2" />
        <path d="M8 6L25 16L8 26Z" fill="#ffd51e" stroke="#a07800" />
        <path d="M10 16H16M13 13V19" stroke="#000" strokeWidth="1.500" />
      </svg>
    ),
  },
  {
    name: "Multisim",
    icon: (
      <svg width="30" height="34" viewBox="0 0 30 34">
        <rect width="30" height="34" fill="#c01f36" />
        <path d="M5 5H10V9H5ZM5 11H10V28H5ZM11 5H17V11H24V28H11Z" fill="#fff" />
        <path d="M17 14H20V22H17Z" fill="#c01f36" />
      </svg>
    ),
  },
  {
    name: "Typing",
    icon: (
      <svg width="30" height="34" viewBox="0 0 30 34">
        <rect width="30" height="34" fill="#4d4d4d" />
        <ellipse cx="15" cy="17" rx="10.500" ry="12" fill="#2e3a48" stroke="#a4a4a4" strokeWidth="3" />
        <text x="15" y="22" textAnchor="middle" fontSize="15" fill="#bbb" fontFamily="Liberation Serif">T</text>
      </svg>
    ),
  },
  {
    name: "Adobe Reader",
    icon: (
      <svg width="30" height="34" viewBox="0 0 30 34">
        <rect width="30" height="34" fill="#a30b0b" />
        <path d="M14 7C11 7 16 19 23 21C26 22 25 19 20 20C14 20 8 24 7 26C8 29 15 16 15 9C15 7 14 7 14 7Z" stroke="#fff" strokeWidth="1.500" fill="none" />
      </svg>
    ),
  },
  {
    name: "McAfee",
    state: "open",
    icon: (
      <svg width="30" height="34" viewBox="0 0 30 34">
        <path d="M15 1Q22 4 29 2C30 17 26 28 15 33C4 28 0 17 1 2Q8 4 15 1Z" fill="#b5122b" stroke="#d8d8d8" strokeWidth="2" />
        <path d="M9 21V10L15 16L21 10V21" stroke="#fff" strokeWidth="3.500" fill="none" />
      </svg>
    ),
  },
  {
    name: "PowerPoint",
    state: "open",
    icon: (
      <svg width="30" height="34" viewBox="0 0 30 34">
        <rect x="14" y="5" width="15" height="24" fill="#fff" stroke="#d24726" />
        <circle cx="22" cy="13" r="4" fill="#fff" stroke="#d24726" strokeWidth="2" />
        <path d="M19 21H27M19 25H27" stroke="#d24726" strokeWidth="2" />
        <path d="M0 3L18 0V34L0 31Z" fill="#d24726" />
        <text x="9" y="22" textAnchor="middle" fontSize="15" fontWeight="700" fill="#fff">P</text>
      </svg>
    ),
  },
]

const slotStyles = {
  none: "",
  open: "border border-white/40 bg-white/20",
  stack: "border border-white/40 bg-white/20",
  active: "border border-white/70 bg-white/50",
}

const Taskbar = () => (
  <footer className="relative flex h-10 shrink-0 items-stretch bg-[linear-gradient(140deg,transparent_0_54%,#ffffff22_56%,transparent_62%),linear-gradient(to_right,#27865a,#238556_45%,#2d9769_58%,#258a59_76%,#2a8d60)] text-white">
    <button aria-label="Start" className="flex w-[52px] items-center pl-3">
      <svg width="26" height="25" viewBox="0 0 26 25" fill="#fff">
        <path d="M0 4L10.500 2V12H0ZM12 1.700L26 0V12H12ZM0 13.500H10.500V23L0 21.500ZM12 13.500H26V25L12 23.300Z" />
      </svg>
    </button>
    <div className="flex gap-[2px]">
      {apps.map(({ name, state = "none", icon }) => (
        <button key={name} aria-label={name} className={`flex w-[60px] items-stretch ${slotStyles[state]}`}>
          <span className="flex flex-1 items-center justify-center">{icon}</span>
          {(state === "stack" || state === "active") && <span className="w-1 border-l border-white/50" />}
        </button>
      ))}
    </div>
    <div className="flex-1 bg-[linear-gradient(130deg,#64927f_4%_22%,#2f6645_23%_27%,#7d9f8f_28%_40%,#64927f_44%_52%,#2f6645_53%_58%,#5f8f7b_59%_66%,#2f6645_67%_70%,transparent_72%)]" />
    <div className="flex items-center gap-2">
      <svg width="9" height="6" viewBox="0 0 9 6" fill="#fff" className="mr-2">
        <path d="M4.500 0L9 5H0Z" />
      </svg>
      <svg width="16" height="16" viewBox="0 0 16 16" fill="none" stroke="#fff">
        <path d="M1.500 0V3M4.500 0V3M0.500 3.500H5.500V7H0.500ZM3 7V15" strokeWidth="1.500" />
        <path d="M7.500 2.500H14.500V14.500H7.500ZM10 1H12" strokeWidth="1.500" />
        <path d="M10 7H12V12H10Z" fill="#fff" />
      </svg>
      <svg width="16" height="14" viewBox="0 0 16 14" fill="#fff">
        <path d="M0 11H2V14H0ZM3 9H5V14H3ZM6 6H8V14H6ZM9 3H11V14H9ZM12 0H14V14H12Z" />
      </svg>
      <svg width="16" height="16" viewBox="0 0 16 16" fill="none" stroke="#fff">
        <path d="M1 5.500H3L6 2V14L3 10.500H1Z" fill="#fff" />
        <path d="M8 5Q10 8 8 11M10 3Q13.500 8 10 13M12 1Q17 8 12 15" />
      </svg>
    </div>
    <div className="w-[79px] pt-[5px] text-center text-[11px] leading-[17px]">
      15:13
      <br />
      5.4.2016
    </div>
    <div className="pointer-events-none absolute top-0 right-0 left-[232px] h-[3px] bg-white/40" />
  </footer>
)

const App = () => (
  <div className="flex h-screen flex-col overflow-hidden font-['Roboto','Open_Sans',sans-serif] text-black">
    <main className="flex min-h-0 flex-1">
      <FrontPanelWindow />
      <DaqDialog />
      <BlockDiagramWindow />
    </main>
    <Taskbar />
  </div>
)

export default App
